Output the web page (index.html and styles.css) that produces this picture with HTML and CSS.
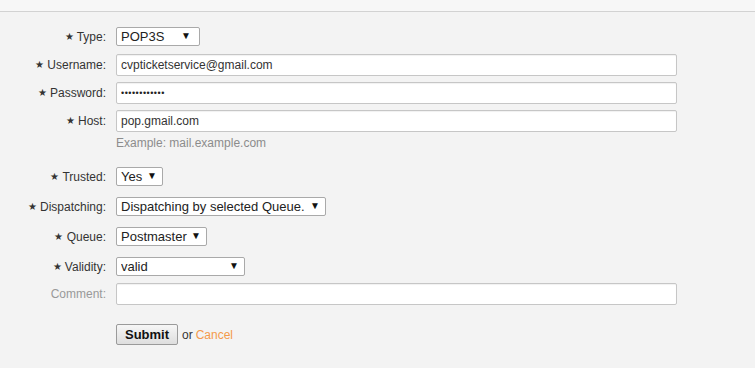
FILE: index.html
```html
<!DOCTYPE html>
<html lang="en">
    <head>
        <meta charset="UTF-8" />
        <meta name="viewport" content="width=device-width, initial-scale=1.0" />
        <title>Mail Account</title>
        <link rel="stylesheet" href="styles.css">
    </head>
    <body>
        <div class="topbar"></div>

        <form class="mailform">
            <div class="row row-select">
                <label class="label mandatory"><span class="marker">★</span> Type:</label>
                <span class="select w-type">
                    <select><option>POP3S</option></select>
                </span>
            </div>
            <div class="row row-input">
                <label class="label mandatory"><span class="marker">★</span> Username:</label>
                <input class="text" type="text" value="cvpticketservice@gmail.com">
            </div>
            <div class="row row-input">
                <label class="label mandatory"><span class="marker">★</span> Password:</label>
                <input class="text pass" type="password" value="secretpass12">
            </div>
            <div class="row row-input row-host">
                <label class="label mandatory"><span class="marker">★</span> Host:</label>
                <input class="text" type="text" value="pop.gmail.com">
            </div>
            <p class="hint">Example: mail.example.com</p>

            <div class="row row-select">
                <label class="label mandatory"><span class="marker">★</span> Trusted:</label>
                <span class="select w-trusted">
                    <select><option>Yes</option></select>
                </span>
            </div>
            <div class="row row-select">
                <label class="label mandatory"><span class="marker">★</span> Dispatching:</label>
                <span class="select w-dispatch">
                    <select><option>Dispatching by selected Queue.</option></select>
                </span>
            </div>
            <div class="row row-select">
                <label class="label mandatory"><span class="marker">★</span> Queue:</label>
                <span class="select w-queue">
                    <select><option>Postmaster</option></select>
                </span>
            </div>
            <div class="row row-select row-last">
                <label class="label mandatory"><span class="marker">★</span> Validity:</label>
                <span class="select w-valid">
                    <select><option>valid</option></select>
                </span>
            </div>
            <div class="row row-input row-comment">
                <label class="label optional">Comment:</label>
                <input class="text" type="text" value="">
            </div>

            <div class="actions">
                <button class="submit" type="button">Submit</button>
                <span class="or">or</span>
                <a class="cancel" href="#">Cancel</a>
            </div>
        </form>
    </body>
</html>
```

FILE: styles.css
```css
html,
body {
    margin: 0;
    padding: 0;
    height: 100%;
}
body {
    background: #f3f3f3;
    font-family: "Liberation Sans", Arial, sans-serif;
    font-size: 12px;
    color: #333;
}

/* strip at the top */
.topbar {
    height: 11px;
    background: #f7f7f7;
    border-bottom: 1px solid #d2d2d2;
}

.mailform {
    margin: 0;
    padding-top: 15px;
}

/* one label + field line */
.row {
    display: flex;
    align-items: center;
}
.row-select {
    height: 19px;
    margin-bottom: 11px;
}
.row-select:first-child {
    margin-bottom: 8px;
}
.row-input {
    height: 22px;
    margin-bottom: 6px;
}
.row-host {
    margin-bottom: 0;
}
.row-last {
    margin-bottom: 7px;
}
.row-comment {
    margin-bottom: 19px;
}

.label {
    width: 106px;
    margin-right: 10px;
    text-align: right;
    white-space: nowrap;
}
.optional {
    color: #999;
}
.marker {
    font-size: 10px;
    vertical-align: 1px;
}

/* text inputs */
.text {
    box-sizing: border-box;
    width: 561px;
    height: 22px;
    margin: 0;
    padding: 0 4px;
    border: 1px solid #c6c6c6;
    border-radius: 2px;
    background: #fff;
    box-shadow: inset 0 1px 1px rgba(0, 0, 0, 0.06);
    font-family: inherit;
    font-size: 12px;
    color: #333;
    outline: none;
}
.pass {
    font-size: 9px;
    letter-spacing: 0.5px;
    color: #222;
}

.hint {
    margin: 4px 0 17px 116px;
    line-height: 14px;
    color: #8c8c8c;
}

/* select boxes with the small black arrow */
.select {
    position: relative;
    display: block;
    height: 19px;
}
.select select {
    box-sizing: border-box;
    width: 100%;
    height: 19px;
    margin: 0;
    padding: 0 0 0 4px;
    border: 1px solid #a9a9a9;
    border-radius: 2px;
    background: #fff;
    font-family: inherit;
    font-size: 13px;
    color: #222;
    -webkit-appearance: none;
    appearance: none;
    outline: none;
}
.select::after {
    content: "▼";
    position: absolute;
    right: 6px;
    top: 4px;
    font-size: 10px;
    line-height: 10px;
    color: #111;
    pointer-events: none;
}
.w-type {
    width: 84px;
}
.w-type::after {
    right: 9px;
}
.w-trusted {
    width: 47px;
}
.w-dispatch {
    width: 210px;
}
.w-queue {
    width: 91px;
}
.w-valid {
    width: 129px;
}

/* submit line */
.actions {
    display: flex;
    align-items: center;
    margin-left: 116px;
}
.submit {
    box-sizing: border-box;
    height: 21px;
    width: 62px;
    padding: 0;
    border: 1px solid #9a9a9a;
    border-radius: 2px;
    background: linear-gradient(#f6f6f6, #dedede);
    font-family: inherit;
    font-size: 13px;
    font-weight: bold;
    color: #111;
}
.or {
    margin: 0 3px 0 4px;
    color: #333;
}
.cancel {
    color: #f39a4b;
    text-decoration: none;
}
```
